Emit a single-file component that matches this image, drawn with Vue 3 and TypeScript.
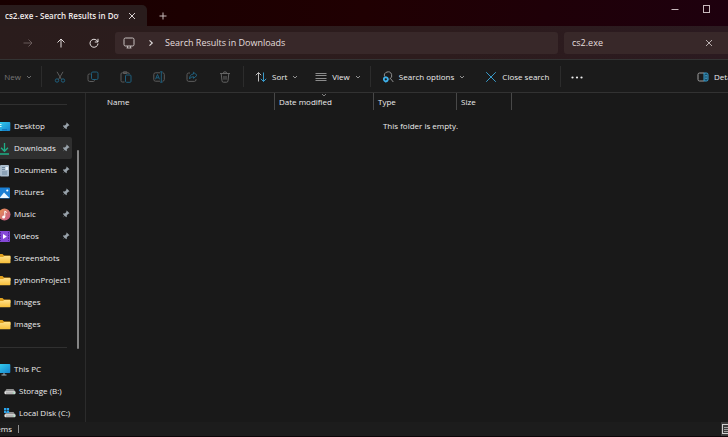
<script setup lang="ts">
import { ref } from 'vue'

interface Place {
  label: string
  icon: 'desktop' | 'downloads' | 'documents' | 'pictures' | 'music' | 'videos' | 'folder'
  pinned: boolean
  active?: boolean
}

const query = ref('cs2.exe')

const places: Place[] = [
  { label: 'Desktop', icon: 'desktop', pinned: true },
  { label: 'Downloads', icon: 'downloads', pinned: true, active: true },
  { label: 'Documents', icon: 'documents', pinned: true },
  { label: 'Pictures', icon: 'pictures', pinned: true },
  { label: 'Music', icon: 'music', pinned: true },
  { label: 'Videos', icon: 'videos', pinned: true },
  { label: 'Screenshots', icon: 'folder', pinned: false },
  { label: 'pythonProject1', icon: 'folder', pinned: false },
  { label: 'images', icon: 'folder', pinned: false },
  { label: 'images', icon: 'folder', pinned: false },
]
</script>

<template>
  <div class="window">
    <svg class="defs" aria-hidden="true">
      <defs>
        <linearGradient id="g-desk" x1="0" y1="0" x2="1" y2="1">
          <stop offset="0" stop-color="#35d0ee" /><stop offset="1" stop-color="#1583cf" />
        </linearGradient>
        <linearGradient id="g-folder" x1="0" y1="0" x2="0" y2="1">
          <stop offset="0" stop-color="#ffe08a" /><stop offset="1" stop-color="#f6bd37" />
        </linearGradient>
        <linearGradient id="g-music" x1="0" y1="0" x2="1" y2="1">
          <stop offset="0" stop-color="#e9944f" /><stop offset="1" stop-color="#c4568c" />
        </linearGradient>
        <symbol id="chev" viewBox="0 0 6 6"><path d="M1 2l2 2 2-2" fill="none" stroke="currentColor" stroke-width=".9" /></symbol>
        <symbol id="i-desktop" viewBox="0 0 13 13">
          <rect x="0" y="2" width="12.300" height="9" rx="1" fill="url(#g-desk)" />
          <path d="M2 4.500h1.500M2 6.500h1.500" stroke="#d4f7ff" stroke-width="1" />
          <path d="M4 9.800h5" stroke="#0f6db5" />
        </symbol>
        <symbol id="i-downloads" viewBox="0 0 13 13">
          <path d="M6.500 1v8M3 5.800l3.500 3.500L10 5.800M2 12h9" fill="none" stroke="#1fae86" stroke-width="1.300" />
        </symbol>
        <symbol id="i-documents" viewBox="0 0 13 13">
          <rect x="2" y="1" width="9" height="11.500" rx="1" fill="#a9bccd" />
          <path d="M4 3.500h3M4 5.500h3M4 8h5M4 10h5" stroke="#6d879f" />
          <rect x="7.500" y="3" width="2.500" height="3" fill="#e9f2fa" />
        </symbol>
        <symbol id="i-pictures" viewBox="0 0 13 13">
          <rect x="1" y="1.500" width="11" height="11" rx="1" fill="#1a7fd4" />
          <path d="M1.500 12l4.500-5.500 5.500 5.500z" fill="#eaf7ff" /><circle cx="9.300" cy="4.500" r="1.100" fill="#fff" />
        </symbol>
        <symbol id="i-music" viewBox="0 0 13 13">
          <circle cx="6.500" cy="6.500" r="6" fill="url(#g-music)" />
          <path d="M6.800 9V3.200l2 1.300" fill="none" stroke="#fff" /><circle cx="5.600" cy="9" r="1.500" fill="#fff" />
        </symbol>
        <symbol id="i-videos" viewBox="0 0 13 13">
          <rect x="0" y="1" width="12" height="11" rx="1" fill="#8548d6" />
          <path d="M2.500 2v9M10.500 2v9" stroke="#4c2392" stroke-dasharray="1.500 1.200" />
          <path d="M5 4l3.800 2.500L5 9z" fill="#fff" />
        </symbol>
        <symbol id="i-folder" viewBox="0 0 13 13">
          <path d="M0 2h4.500L6 3.500h5.800q.7 0 .7.700V7H0z" fill="#dfa01e" />
          <path d="M0 5h5l1.300-1h5.500q.7 0 .7.700v5.800q0 .8-.8.800H0z" fill="url(#g-folder)" />
        </symbol>
        <symbol id="i-drive" viewBox="0 0 12 12">
          <path d="M2.500 4h7l2 3H.5z" fill="#8f8f8f" /><rect x=".5" y="6.300" width="11" height="3" rx="1" fill="#e0e0e0" />
          <path d="M2 8h7" stroke="#777" stroke-width=".8" /><path d="M9.300 8h1" stroke="#39c47a" />
        </symbol>
      </defs>
    </svg>

    <header class="titlebar">
      <div class="tab">
        <span class="tab-title">cs2.exe - Search Results in Downloads</span>
        <button type="button" class="tab-close" aria-label="Close tab">
          <svg width="8" height="8" viewBox="0 0 8 8"><path d="M1 1l6 6M7 1L1 7" stroke="currentColor" /></svg>
        </button>
      </div>
      <button type="button" class="tab-new" aria-label="New tab">
        <svg width="8" height="8" viewBox="0 0 8 8"><path d="M4 .5v7M.5 4h7" stroke="currentColor" /></svg>
      </button>
      <div class="caption">
        <button type="button" aria-label="Minimize">
          <svg width="8" height="8" viewBox="0 0 8 8"><path d="M.5 4.500h7" stroke="currentColor" /></svg>
        </button>
        <button type="button" aria-label="Maximize">
          <svg width="8" height="8" viewBox="0 0 8 8"><rect x="1.500" y=".5" width="6" height="7" fill="none" stroke="currentColor" /></svg>
        </button>
      </div>
    </header>

    <div class="navbar">
      <button type="button" class="nav-btn dim" aria-label="Forward">
        <svg width="10" height="10" viewBox="0 0 10 10"><path d="M.5 5h8.500M5.500 1.500L9 5 5.500 8.500" fill="none" stroke="currentColor" stroke-width=".9" /></svg>
      </button>
      <button type="button" class="nav-btn" aria-label="Up">
        <svg width="10" height="10" viewBox="0 0 10 10"><path d="M5 9.500V1.200M1.500 4.500L5 1l3.500 3.500" fill="none" stroke="currentColor" /></svg>
      </button>
      <button type="button" class="nav-btn" aria-label="Refresh">
        <svg width="10" height="10" viewBox="0 0 10 10"><path d="M8.800 4A4 4 0 1 0 9 5.500M9 .8v3.200H5.800" fill="none" stroke="currentColor" /></svg>
      </button>
      <nav class="address" aria-label="Address">
        <svg width="12" height="12" viewBox="0 0 12 12"><rect x="1" y="1" width="10" height="8" rx="1.500" fill="none" stroke="#c6bfbf" /><path d="M4.500 9v2M7.500 9v2M3.500 11h5" stroke="#c6bfbf" stroke-width=".9" /></svg>
        <svg class="crumb-sep" width="6" height="8" viewBox="0 0 6 8"><path d="M1.500 1.300L4.300 4 1.500 6.700" fill="none" stroke="#e4dede" stroke-width="1.100" /></svg>
        <a href="#">Search Results in Downloads</a>
      </nav>
      <div class="search">
        <input v-model="query" type="text" aria-label="Search" />
        <button type="button" aria-label="Clear search" @click="query = ''">
          <svg width="8" height="8" viewBox="0 0 8 8"><path d="M1 1l6 6M7 1L1 7" stroke="currentColor" /></svg>
        </button>
      </div>
    </div>

    <div class="toolbar" role="toolbar" aria-label="Commands">
      <button type="button" class="new dim">New <svg class="chev"><use href="#chev" /></svg></button>
      <i class="rule"></i>
      <div class="icons">
        <button type="button" aria-label="Cut">
          <svg viewBox="0 0 12 12"><path d="M3 .8l4.700 8M9 .8L4.300 8.800" stroke="#5c5c5c" /><circle cx="3" cy="9.500" r="1.700" stroke="#1f5f7d" /><circle cx="9" cy="9.500" r="1.700" stroke="#1f5f7d" /></svg>
        </button>
        <button type="button" aria-label="Copy">
          <svg viewBox="0 0 12 12"><path d="M3.500 3H2.300Q1 3 1 4.300v4.400Q1 10.500 2.800 10.500h3.500q1.200 0 1.200-1.200" stroke="#5c5c5c" /><rect x="4.500" y="1" width="6.500" height="7.500" rx="1.300" stroke="#1f5f7d" /></svg>
        </button>
        <button type="button" aria-label="Paste">
          <svg viewBox="0 0 12 12"><path d="M4.500 11H2.300Q1 11 1 9.700V3Q1 1.800 2.300 1.800H8q1.300 0 1.300 1.200M3.500 2.500V.8h3.300v1.700z" stroke="#5c5c5c" /><rect x="5.500" y="4" width="5.500" height="7.300" rx="1" stroke="#1f5f7d" /></svg>
        </button>
        <button type="button" aria-label="Rename">
          <svg viewBox="0 0 12 12"><path d="M7 1.800H2.500Q.8 1.800.8 3.500v5q0 1.700 1.700 1.700H7M9.500 1.800q1.800 0 1.800 1.700v5q0 1.700-1.800 1.700" stroke="#5c5c5c" /><path d="M2.500 8.300L4.500 3.500l2 4.800M3.200 6.800h2.600M8.300.8v10.400M7.200.8h2.300M7.200 11.200h2.300" stroke="#1f5f7d" /></svg>
        </button>
        <button type="button" aria-label="Share">
          <svg viewBox="0 0 12 12"><path d="M4 2H2.700Q1 2 1 3.700v5q0 1.700 1.700 1.700h5.600Q10 10.400 10 8.700V8" stroke="#5c5c5c" /><path d="M7.500 1.200L11 4.300 7.500 7.400V5.700Q4.700 5.500 3.500 8 3.700 3.200 7.500 3z" stroke="#1f5f7d" /></svg>
        </button>
        <button type="button" aria-label="Delete">
          <svg viewBox="0 0 12 12"><path d="M1 2.500h10M4.300 2.300Q4.300.8 6 .8t1.700 1.500M2.200 2.500l.8 7.300q.1 1.400 1.400 1.400h3.200q1.300 0 1.400-1.400l.8-7.300M5 5v3.700M7 5v3.700" stroke="#646464" /></svg>
        </button>
      </div>
      <i class="rule"></i>
      <button type="button" class="cmd">
        <svg viewBox="0 0 12 12"><path d="M3.500 10.500v-9M.8 4.200l2.700-2.700 2.700 2.700" stroke="#bdbdbd" /><path d="M8.500 1.500v9M5.800 7.800l2.700 2.700 2.700-2.700" stroke="#3a9bcb" /></svg>
        Sort <svg class="chev"><use href="#chev" /></svg>
      </button>
      <button type="button" class="cmd view">
        <svg viewBox="0 0 12 12"><path d="M.5 2.500h11M.5 4.500h11M.5 7.500h11M.5 9.500h11" stroke="#8c8c8c" /></svg>
        View <svg class="chev"><use href="#chev" /></svg>
      </button>
      <i class="rule"></i>
      <button type="button" class="cmd">
        <svg viewBox="0 0 12 12"><path d="M2.500 5.500A3.700 3.700 0 1 1 7.500 8M8.300 7.300l3 3.700" stroke="#8f8f8f" /><circle cx="3.800" cy="8.300" r="2" stroke="#3fb1ea" stroke-width="1.700" /><path d="M3.800 5.500v1M3.800 10.500v1M1 8.300h1M5.600 8.300h1" stroke="#3fb1ea" /></svg>
        Search options <svg class="chev"><use href="#chev" /></svg>
      </button>
      <button type="button" class="cmd close">
        <svg viewBox="0 0 12 12"><path d="M1.200 1.200l9.600 9.600M10.800 1.200l-9.600 9.600" stroke="#3a9bcb" /></svg>
        Close search
      </button>
      <i class="rule"></i>
      <button type="button" class="more" aria-label="See more">
        <svg viewBox="0 0 12 12"><g fill="#f0f0f0"><circle cx="1.500" cy="6.500" r="1.100" /><circle cx="6" cy="6.500" r="1.100" /><circle cx="10.500" cy="6.500" r="1.100" /></g></svg>
      </button>
      <button type="button" class="cmd details">
        <svg viewBox="0 0 12 12"><path d="M7 2H2.500Q1 2 1 3.500v5Q1 10 2.500 10H7" stroke="#a0a0a0" /><path d="M7 2h2.500Q11 2 11 3.500v5q0 1.500-1.500 1.500H7z" fill="#174e68" stroke="#3a9bcb" /><path d="M8.300 4.500h1.500M8.300 6h1.500M8.300 7.500h1.500" stroke="#5abbe8" stroke-width=".7" /></svg>
        Details
      </button>
    </div>

    <div class="body">
      <aside class="sidebar">
        <nav class="tree" aria-label="Folders">
          <hr />
          <a v-for="(place, i) in places" :key="i" href="#" class="row" :class="{ active: place.active }">
            <svg class="row-icon"><use :href="'#i-' + place.icon" /></svg>
            <span>{{ place.label }}</span>
            <svg v-if="place.pinned" class="pin" viewBox="0 0 8 8"><path d="M4.700.5l2.800 2.800-.8.500-.4-.1-1.500 1.500.1 1.300-.7.700-1.500-1.500L.7 7.500l1.600-2.100L.9 4l.7-.7 1.300.1 1.500-1.500V1z" fill="#98a2aa" /></svg>
          </a>
          <hr class="section" />
          <a href="#" class="row">
            <svg class="row-icon" viewBox="0 0 13 13"><rect x="0" y="1" width="12.300" height="9" rx="1" fill="url(#g-desk)" /><path d="M6 10v2M3.500 12h5" stroke="#9fb4c0" /></svg>
            <span>This PC</span>
          </a>
          <a href="#" class="row child">
            <svg class="drive"><use href="#i-drive" /></svg>
            <span>Storage (B:)</span>
          </a>
          <a href="#" class="row child">
            <svg class="drive" viewBox="0 0 12 12"><use href="#i-drive" y="1" width="12" height="12" /><path d="M0 1h2.300v2.300H0zM2.800 1h2.300v2.300H2.800zM0 3.800h2.300v2.300H0zM2.800 3.800h2.300v2.300H2.800z" fill="#2ba4ec" /></svg>
            <span>Local Disk (C:)</span>
          </a>
        </nav>
        <div class="scroll"><div class="thumb"></div></div>
      </aside>

      <main class="content">
        <table>
          <thead>
            <tr>
              <th class="c-name">Name</th>
              <th class="c-date">Date modified<svg class="sort-mark"><use href="#chev" /></svg></th>
              <th class="c-type">Type</th>
              <th class="c-size">Size</th>
            </tr>
          </thead>
        </table>
        <p class="empty">This folder is empty.</p>
      </main>
    </div>

    <footer class="status">
      <span class="count">0 items</span>
      <i class="count-rule"></i>
      <button type="button" class="layout" aria-label="Details layout">
        <svg width="10" height="12" viewBox="0 0 10 12"><rect x="1.500" y="1.500" width="12" height="9" fill="none" stroke="#d0d0d0" /><path d="M3 4.500h7M3 6.500h7M3 8.500h7" stroke="#a0a0a0" /></svg>
      </button>
    </footer>
  </div>
</template>

<style>
body {
  margin: 0;
  background: #191919;
}
</style>

<style scoped>
.window {
  display: flex;
  flex-direction: column;
  height: 100vh;
  overflow: hidden;
  box-sizing: border-box;
  border-bottom: 1px solid #0e0508;
  background: #191919;
  color: #ececec;
  font: 8px/12px "Open Sans", "Noto Sans", sans-serif;
}
.defs {
  position: absolute;
  width: 0;
  height: 0;
}
button {
  display: flex;
  align-items: center;
  justify-content: center;
  padding: 0;
  border: 0;
  background: none;
  color: inherit;
  font: inherit;
  white-space: nowrap;
}
a {
  color: inherit;
  text-decoration: none;
}
svg {
  flex: none;
}
.dim {
  color: #777;
}
.chev {
  width: 6px;
  height: 6px;
  color: #a0a0a0;
}

.titlebar {
  display: flex;
  height: 26px;
  flex: none;
  background: linear-gradient(90deg, #180000, #200002 50%, #1e000e);
}
.tab {
  display: flex;
  align-items: center;
  gap: 9px;
  width: 142px;
  margin-top: 5px;
  padding-left: 5px;
  border-radius: 0 5px 0 0;
  background: #291c1c;
  color: #f0eaea;
}
.tab-title {
  width: 114px;
  overflow: hidden;
  white-space: nowrap;
  font-weight: 600;
}
.tab-close {
  color: #d8d0d0;
}
.tab-new {
  width: 32px;
  padding-top: 5px;
  color: #c8bcbc;
}
.caption {
  display: flex;
  align-items: center;
  gap: 23px;
  height: 18px;
  margin-left: auto;
  padding-right: 18px;
  color: #c8b8bc;
}

.navbar {
  display: flex;
  align-items: center;
  height: 33px;
  flex: none;
  padding-left: 11px;
  background: linear-gradient(90deg, #2a1c1c, #2d1c1d 60%, #2b1a20);
  border-bottom: 1px solid #333;
  color: #e4dede;
  font-size: 9px;
}
.nav-btn {
  width: 33px;
  height: 22px;
}
.nav-btn.dim {
  color: #6e6060;
}
.address,
.search {
  display: flex;
  align-items: center;
  height: 22px;
  box-sizing: border-box;
  border-radius: 3px;
  background: #382829;
}
.address {
  flex: 1;
  margin: 0 6px 0 5px;
  padding-left: 8px;
}
.crumb-sep {
  margin: 0 11px 0 13px;
}
.search {
  width: 164px;
  padding: 0 15px 0 8px;
  border-radius: 3px 0 0 3px;
}
.search input {
  flex: 1;
  min-width: 0;
  padding: 0;
  border: 0;
  outline: 0;
  background: none;
  color: inherit;
  font: inherit;
}
.search button {
  color: #b8aeae;
}

.toolbar {
  display: flex;
  align-items: center;
  height: 31px;
  padding-top: 1px;
  flex: none;
  background: #1b1b1b;
  border-bottom: 1px solid #323232;
}
.toolbar svg:not(.chev) {
  width: 12px;
  height: 12px;
  fill: none;
}
.rule {
  flex: none;
  width: 1px;
  height: 21px;
  background: #2c2c2c;
}
.new {
  width: 41px;
  gap: 5px;
  padding-right: 9px;
  box-sizing: border-box;
  justify-content: flex-end;
}
.new .chev {
  color: #777;
}
.icons {
  display: flex;
  padding: 0 2px 0 1px;
}
.icons button {
  width: 33px;
  height: 24px;
}
.cmd {
  gap: 5px;
  padding: 0 9px 0 11px;
}
.cmd.view {
  padding-left: 8px;
}
.cmd.close {
  padding: 0 11px;
}
.more {
  width: 32px;
}
.cmd.details {
  width: 31px;
  margin-left: auto;
  padding: 0;
  justify-content: flex-start;
  overflow: hidden;
}

.body {
  display: flex;
  flex: 1;
  min-height: 0;
  overflow: hidden;
}
.sidebar {
  display: flex;
  width: 85px;
  flex: none;
  border-right: 1px solid #2b2b2b;
}
.tree {
  width: 72px;
}
.tree hr {
  height: 1px;
  margin: 11px 5px 10px 0;
  border: 0;
  background: #303030;
}
.tree hr.section {
  margin-top: 12px;
}
.row {
  display: flex;
  align-items: center;
  height: 22px;
  gap: 3px;
  box-sizing: border-box;
  border-radius: 0 2px 2px 0;
  white-space: nowrap;
}
.row.active {
  background: #2f2f2f;
}
.row-icon {
  width: 13px;
  height: 13px;
  margin-left: -2px;
}
.pin {
  width: 8px;
  height: 8px;
  margin: 0 2px 0 auto;
}
.child {
  padding-left: 4px;
}
.drive {
  width: 12px;
  height: 12px;
}
.scroll {
  flex: 1;
  padding: 57px 0 0 5px;
}
.thumb {
  width: 2px;
  height: 199px;
  border-radius: 1px;
  background: #858585;
}

.content {
  flex: 1;
  min-width: 0;
}
table {
  border-collapse: separate;
  border-spacing: 0;
  table-layout: fixed;
  width: 426px;
}
th {
  position: relative;
  box-sizing: border-box;
  height: 17px;
  padding: 0 0 0 4px;
  border-right: 1px solid #484848;
  text-align: left;
  font-weight: 400;
}
th.c-name {
  width: 189px;
  padding-left: 21px;
}
.c-date {
  width: 99px;
}
.c-type {
  width: 83px;
}
.sort-mark {
  position: absolute;
  top: -1px;
  left: 46px;
  width: 6px;
  height: 6px;
  color: #8a8a8a;
}
.empty {
  margin: 10px 0 0;
  padding-left: 27px;
  text-align: center;
}

.status {
  display: flex;
  align-items: center;
  height: 14px;
  flex: none;
  background: #1c1c1c;
}
.count {
  display: flex;
  justify-content: flex-end;
  width: 12px;
  overflow: hidden;
  white-space: nowrap;
}
.count-rule {
  width: 1px;
  height: 8px;
  margin-left: 6px;
  background: #909090;
}
.layout {
  width: 7px;
  height: 15px;
  margin-left: auto;
  justify-content: flex-start;
  overflow: hidden;
  background: #3c3c3c;
}
</style>
